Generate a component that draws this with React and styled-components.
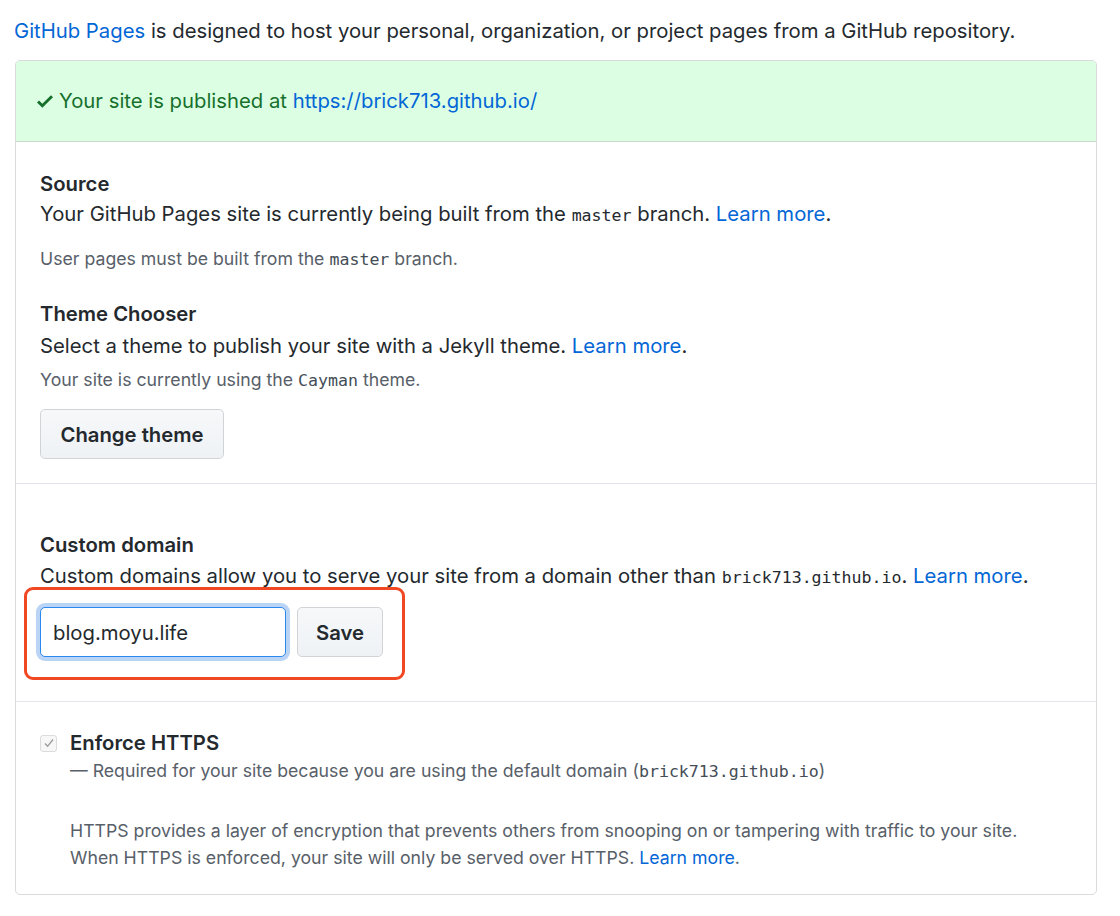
import React from "react";
import styled, { createGlobalStyle } from "styled-components";

const Global = createGlobalStyle`
  html, body { margin: 0; padding: 0; background: #fff; }
  body {
    font-family: Inter, "Liberation Sans", Arial, sans-serif;
    color: #24292e;
    font-size: 20.3px;
    line-height: 30px;
    -webkit-font-smoothing: antialiased;
  }
`;

const Page = styled.div`
  width: 1120px;
  padding: 16px 0 0 0;
`;

const Intro = styled.p`
  margin: 0 0 14px 14px;
  font-size: 20.3px;
  line-height: 30px;
`;

const Link = styled.a`
  color: #0366d6;
  text-decoration: none;
`;

const Box = styled.div`
  margin-left: 15px;
  width: 1080px;
  border: 1px solid #d9dadb;
  border-radius: 5px;
  overflow: hidden;
`;

const Flash = styled.div`
  height: 80px;
  background: #dcffe4;
  border-bottom: 1px solid #c8d9cc;
  display: flex;
  align-items: center;
  padding-left: 21px;
  color: #176f2c;
  gap: 6px;
`;

const Section = styled.div`
  padding: ${(p) => p.$pad};
  border-bottom: ${(p) => (p.$last ? "none" : "1px solid #e1e4e8")};
  position: relative;
`;

const Heading = styled.h3`
  margin: ${(p) => p.$m || 0};
  font-size: 20.3px;
  line-height: 30px;
  font-weight: 600;
`;

const Text = styled.p`
  margin: ${(p) => p.$m || "1px 0 0 0"};
  font-size: 20.3px;
  line-height: 30px;
`;

const Note = styled.p`
  margin: ${(p) => p.$m};
  font-size: 17.7px;
  line-height: 25px;
  color: #586069;
`;

const Code = styled.code`
  font-family: "DejaVu Sans Mono", Menlo, monospace;
  font-size: 16.6px;
  line-height: 1;
  color: ${(p) => p.$c || "inherit"};
`;

const Button = styled.button`
  box-sizing: border-box;
  height: 50px;
  width: ${(p) => p.$w}px;
  margin-top: ${(p) => p.$mt || 0}px;
  padding: 0;
  border: 1px solid #d1d3d6;
  border-radius: 5px;
  background: linear-gradient(#f6f8fa, #eff2f5);
  font-family: Inter, "Liberation Sans", Arial, sans-serif;
  font-size: 20.3px;
  font-weight: 600;
  color: #24292e;
  cursor: pointer;
  display: block;
`;

const FormRow = styled.div`
  position: relative;
  display: flex;
  gap: 11px;
  margin-top: 16px;
  width: 343px;
`;

const Highlight = styled.div`
  position: absolute;
  left: -16px;
  top: -20px;
  right: -22px;
  bottom: -23px;
  border: 3px solid #f04822;
  border-radius: 9px;
  pointer-events: none;
`;

const Input = styled.input`
  box-sizing: border-box;
  width: 246px;
  height: 50px;
  border: 1px solid #2b88f0;
  border-radius: 5px;
  box-shadow: 0 0 0 4px rgba(3, 102, 214, 0.28);
  padding: 0 12px;
  font-family: Inter, "Liberation Sans", Arial, sans-serif;
  font-size: 20.3px;
  color: #24292e;
  outline: none;
`;

const CheckRow = styled.div`
  display: flex;
  align-items: center;
  gap: 13px;
`;

const CheckBox = styled.span`
  box-sizing: border-box;
  width: 17px;
  height: 17px;
  border: 1px solid #dcdcdc;
  border-radius: 3px;
  background: #f7f7f7;
  display: flex;
  align-items: center;
  justify-content: center;
`;

const Indented = styled.div`
  padding-left: 30px;
`;

const Para = styled.p`
  margin: 34px 0 0 0;
  font-size: 17.7px;
  line-height: 27px;
  color: #586069;
`;

export default function App() {
  return (
    <>
      <Global />
      <Page>
        <Intro>
          <Link>GitHub Pages</Link> is designed to host your personal, organization, or project pages from a GitHub repository.
        </Intro>
        <Box>
          <Flash>
            <svg width="16" height="13" viewBox="0 3.5 12 9.5">
              <path fill="#176f2c" fillRule="evenodd" d="M12 5l-8 8-4-4 1.5-1.5L4 10l6.5-6.5L12 5z" />
            </svg>
            <span>
              Your site is published at <Link>https://brick713.github.io/</Link>
            </span>
          </Flash>
          <Section $pad="27px 24px 24px 24px">
            <Heading>Source</Heading>
            <Text $m="0">
              Your GitHub Pages site is currently being built from the <Code>master</Code> branch. <Link>Learn more</Link>.
            </Text>
            <Note $m="17px 0 0 0">
              User pages must be built from the <Code $c="#444d56">master</Code> branch.
            </Note>
            <Heading $m="28px 0 0 0">Theme Chooser</Heading>
            <Text $m="2px 0 0 0">
              Select a theme to publish your site with a Jekyll theme. <Link>Learn more</Link>.
            </Text>
            <Note $m="6px 0 0 0">
              Your site is currently using the <Code $c="#444d56">Cayman</Code> theme.
            </Note>
            <Button $w={184} $mt={17}>Change theme</Button>
          </Section>
          <Section $pad="46px 24px 44px 24px">
            <Heading>Custom domain</Heading>
            <Text $m="1px 0 0 0">
              Custom domains allow you to serve your site from a domain other than <Code>brick713.github.io</Code>. <Link>Learn more</Link>.
            </Text>
            <FormRow>
              <Input defaultValue="blog.moyu.life" />
              <Button $w={86}>Save</Button>
              <Highlight />
            </FormRow>
          </Section>
          <Section $pad="26px 24px 23px 24px" $last>
            <CheckRow>
              <CheckBox>
                <svg width="12" height="12" viewBox="0 0 12 12">
                  <path d="M2 6.5l2.6 2.8L10 2.5" fill="none" stroke="#9a9a9a" strokeWidth="1.3" />
                </svg>
              </CheckBox>
              <Heading>Enforce HTTPS</Heading>
            </CheckRow>
            <Indented>
              <Note $m="0">
                — Required for your site because you are using the default domain (<Code $c="#444d56">brick713.github.io</Code>)
              </Note>
              <Para>
                HTTPS provides a layer of encryption that prevents others from snooping on or tampering with traffic to your site.
                <br />
                When HTTPS is enforced, your site will only be served over HTTPS. <Link>Learn more</Link>.
              </Para>
            </Indented>
          </Section>
        </Box>
      </Page>
    </>
  );
}
